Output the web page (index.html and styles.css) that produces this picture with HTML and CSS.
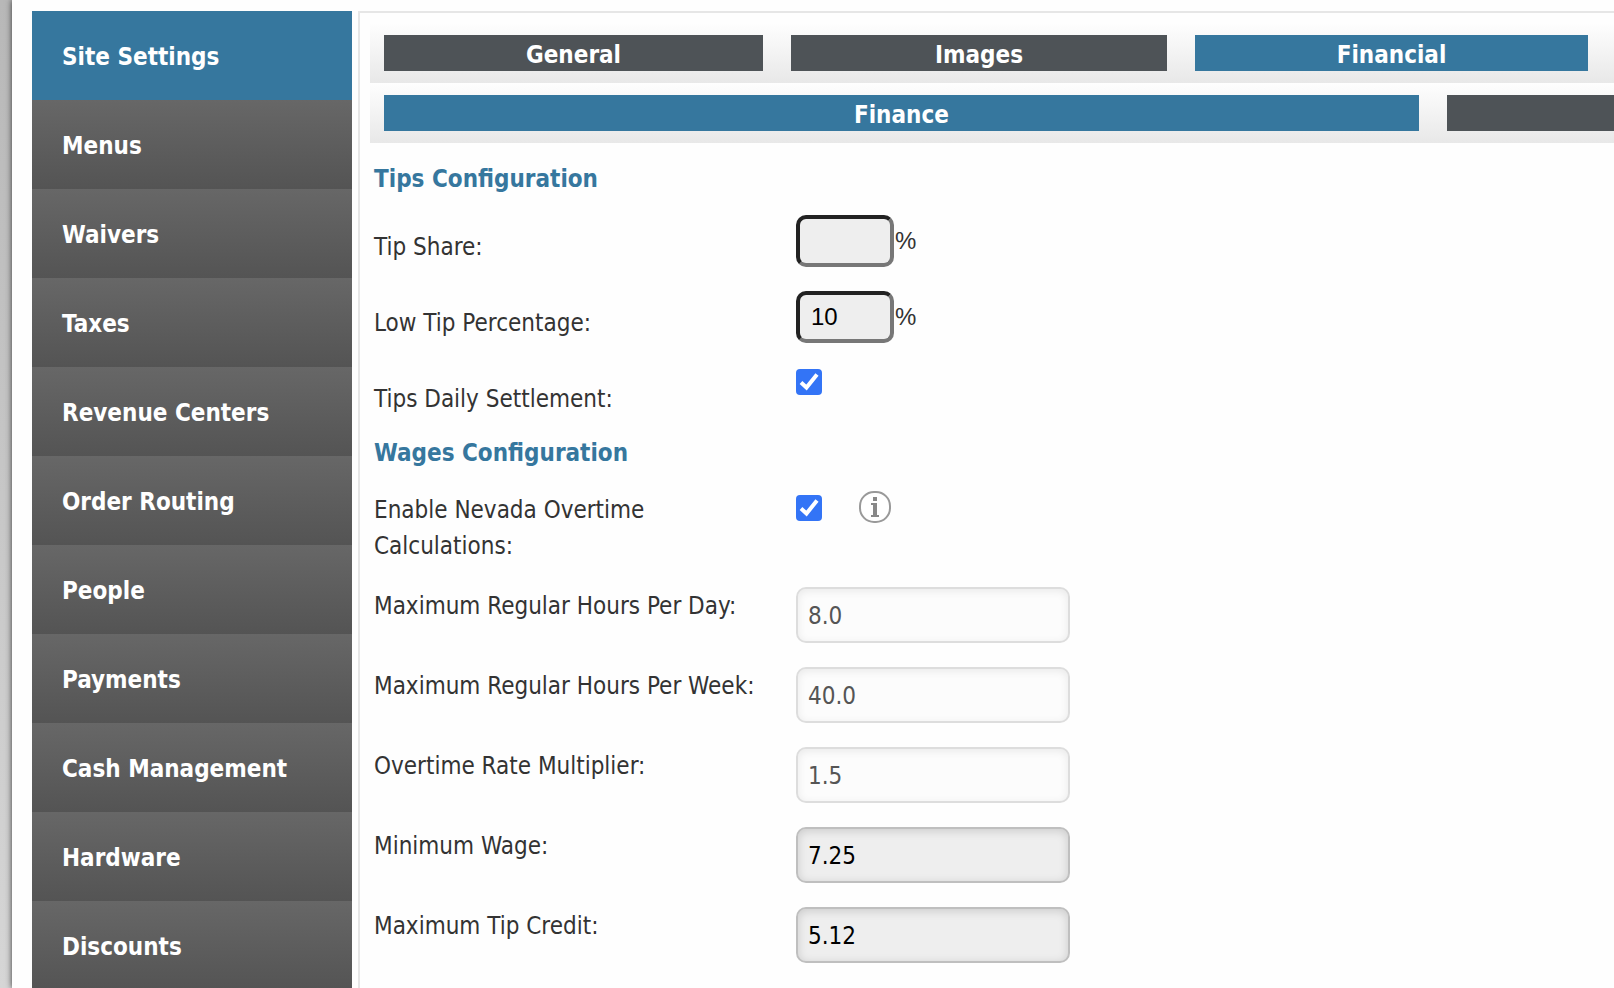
FILE: index.html
```
<!DOCTYPE html>
<html lang="en">
<head>
    <meta charset="UTF-8">
    <meta name="viewport" content="width=device-width, initial-scale=1.0">
    <title>Site Settings - Financial</title>
    <link rel="stylesheet" href="styles.css">
</head>
<body>
    <div class="page">
        <nav class="sidebar">
            <a href="#" class="active">Site Settings</a>
            <a href="#">Menus</a>
            <a href="#">Waivers</a>
            <a href="#">Taxes</a>
            <a href="#">Revenue Centers</a>
            <a href="#">Order Routing</a>
            <a href="#">People</a>
            <a href="#">Payments</a>
            <a href="#">Cash Management</a>
            <a href="#">Hardware</a>
            <a href="#">Discounts</a>
        </nav>

        <main class="content">
            <div class="tabs main-tabs">
                <button type="button" class="tab-btn">General</button>
                <button type="button" class="tab-btn">Images</button>
                <button type="button" class="tab-btn active">Financial</button>
            </div>
            <div class="tabs sub-tabs">
                <button type="button" class="tab-btn active">Finance</button>
                <button type="button" class="tab-btn" aria-label="More"></button>
            </div>

            <form class="settings">
                <h2>Tips Configuration</h2>
                <div class="tips">
                    <div class="row">
                        <label for="tip-share">Tip Share:</label>
                        <div class="field percent"><input type="text" id="tip-share" class="small-input">%</div>
                    </div>
                    <div class="row">
                        <label for="low-tip">Low Tip Percentage:</label>
                        <div class="field percent"><input type="text" id="low-tip" class="small-input" value="10">%</div>
                    </div>
                    <div class="row">
                        <label for="daily-settlement">Tips Daily Settlement:</label>
                        <div class="field"><input type="checkbox" id="daily-settlement" checked></div>
                    </div>
                </div>

                <h2>Wages Configuration</h2>
                <div class="wages">
                    <div class="row">
                        <label for="nevada">Enable Nevada Overtime Calculations:</label>
                        <div class="field with-info">
                            <input type="checkbox" id="nevada" checked>
                            <svg class="info" viewBox="0 0 32 32" width="32" height="32" role="img" aria-label="Info">
                                <rect x="1" y="1" width="30" height="30" rx="14" fill="#fff" stroke="#999" stroke-width="2"/>
                                <path d="M14 6h4v4h-4zM12 12h6v12h2v2h-8v-2h2v-10h-2z" fill="#888"/>
                            </svg>
                        </div>
                    </div>
                    <div class="row">
                        <label for="hours-day">Maximum Regular Hours Per Day:</label>
                        <div class="field"><input type="text" id="hours-day" class="wide-input" value="8.0" disabled></div>
                    </div>
                    <div class="row">
                        <label for="hours-week">Maximum Regular Hours Per Week:</label>
                        <div class="field"><input type="text" id="hours-week" class="wide-input" value="40.0" disabled></div>
                    </div>
                    <div class="row">
                        <label for="overtime-rate">Overtime Rate Multiplier:</label>
                        <div class="field"><input type="text" id="overtime-rate" class="wide-input" value="1.5" disabled></div>
                    </div>
                    <div class="row">
                        <label for="min-wage">Minimum Wage:</label>
                        <div class="field"><input type="text" id="min-wage" class="wide-input" value="7.25"></div>
                    </div>
                    <div class="row">
                        <label for="tip-credit">Maximum Tip Credit:</label>
                        <div class="field"><input type="text" id="tip-credit" class="wide-input" value="5.12"></div>
                    </div>
                </div>
            </form>
        </main>
    </div>
</body>
</html>
```
FILE: styles.css
```
* {
    box-sizing: border-box;
}

body {
    margin: 0;
    padding-left: 12px;
    min-height: 100vh;
    font-family: Tahoma, "DejaVu Sans Condensed", sans-serif;
    font-size: 24px;
    line-height: 36px;
    color: #333;
    background: linear-gradient(#b8b8b8, #d6d6d6);
}

.page {
    display: flex;
    gap: 6px;
    height: 100vh;
    padding: 11px 0 0 20px;
    background: #fefefe;
    box-shadow: 0 0 6px #333;
    overflow: hidden;
}

.sidebar {
    flex: 0 0 320px;
}

.sidebar a {
    display: flex;
    align-items: center;
    height: 89px;
    padding: 2px 0 0 30px;
    color: #fff;
    font-weight: bold;
    text-decoration: none;
    background: linear-gradient(#676767, #545454);
}

.sidebar a.active {
    background: #36779e;
}

.content {
    flex: 1;
    min-width: 0;
    padding: 10px 0 0 10px;
    border-top: 2px solid #e6e6e6;
    border-left: 2px solid #e6e6e6;
}

.tabs {
    display: grid;
    gap: 28px;
    padding: 12px 0 12px 14px;
    background: linear-gradient(#fefefe, #e8e8e8);
}

.main-tabs {
    grid-template-columns: 379fr 376fr 393fr;
    padding-right: 26px;
}

.sub-tabs {
    grid-template-columns: 1034fr 167fr;
}

.tab-btn {
    height: 36px;
    padding: 2px 0 0;
    border: none;
    font: inherit;
    font-weight: bold;
    color: #fff;
    background: #4e5357;
    cursor: pointer;
}

.tab-btn.active {
    background: #36779e;
}

.settings {
    padding: 18px 0 0 4px;
}

h2 {
    margin: 0;
    font-size: 24px;
    line-height: 36px;
    color: #36779e;
}

.row {
    display: grid;
    grid-template-columns: 422px 1fr;
    align-items: start;
}

.row label {
    max-width: 400px;
}

.tips {
    display: grid;
    gap: 24px;
    padding: 18px 0;
}

.tips label {
    padding-top: 14px;
}

.wages {
    display: grid;
    gap: 24px;
    padding: 20px 0;
}

.wages label {
    margin-bottom: -1px;
    padding-top: 1px;
}

.wages .row:first-child label {
    max-width: 300px;
}

.percent {
    display: flex;
    align-items: center;
    font-family: "Liberation Sans", Arial, sans-serif;
    font-size: 24px;
}

input {
    display: block;
    margin: 0;
}

.small-input {
    width: 98px;
    height: 52px;
    margin-right: 1px;
    padding: 0 11px;
    border: 4px solid;
    border-color: #222 #777 #777 #222;
    border-radius: 10px;
    font: inherit;
    color: #000;
    background: #eee;
}

.wide-input {
    width: 274px;
    height: 56px;
    padding: 2px 10px 0;
    border: 2px solid #bfbfbf;
    border-radius: 10px;
    font: inherit;
    color: #000;
    background: #eee;
    box-shadow: inset 0 2px 10px rgba(0, 0, 0, 0.15);
}

.wide-input:disabled {
    border-color: #ddd;
    color: #555;
    background: #fcfcfc;
    box-shadow: inset 0 2px 8px rgba(0, 0, 0, 0.08);
}

input[type="checkbox"] {
    appearance: none;
    width: 26px;
    height: 26px;
    margin-top: 2px;
    border-radius: 4px;
    background: #fff;
    border: 2px solid #777;
}

input[type="checkbox"]:checked {
    border: none;
    background: #3374f6 url("data:image/svg+xml,%3Csvg xmlns='http://www.w3.org/2000/svg' viewBox='0 0 26 26'%3E%3Cpath d='M5 13.500l5.500 5L21 5.500' fill='none' stroke='%23fff' stroke-width='4'/%3E%3C/svg%3E");
}

.with-info {
    display: flex;
    align-items: center;
    gap: 37px;
}
```
